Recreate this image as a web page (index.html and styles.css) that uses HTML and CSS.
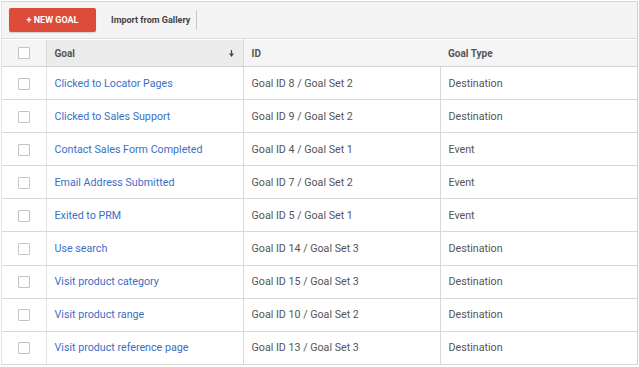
FILE: index.html
```html
<!DOCTYPE html>
<html lang="en">
<head>
    <meta charset="UTF-8">
    <title>Goals</title>
    <link rel="stylesheet" href="styles.css">
</head>
<body>
    <div class="panel">
        <div class="toolbar">
            <button class="new-goal">+ NEW GOAL</button>
            <span class="import">Import from Gallery</span>
        </div>

        <table class="goals">
            <thead>
                <tr>
                    <th class="check"><span class="box"></span></th>
                    <th class="sorted">
                        <div class="th-inner">
                            <span>Goal</span>
                            <svg class="sort" width="5" height="7" viewBox="0 0 5 7">
                                <path d="M2.5 0v4.5" stroke="#444" stroke-width="1.2"/>
                                <path d="M0 3.5h5L2.5 7z" fill="#444"/>
                            </svg>
                        </div>
                    </th>
                    <th>ID</th>
                    <th class="type">Goal Type</th>
                </tr>
            </thead>
            <tbody>
                <tr><td class="check"><span class="box"></span></td><td><a href="#">Clicked to Locator Pages</a></td><td>Goal ID 8 / Goal Set 2</td><td>Destination</td></tr>
                <tr><td class="check"><span class="box"></span></td><td><a href="#">Clicked to Sales Support</a></td><td>Goal ID 9 / Goal Set 2</td><td>Destination</td></tr>
                <tr><td class="check"><span class="box"></span></td><td><a href="#">Contact Sales Form Completed</a></td><td>Goal ID 4 / Goal Set 1</td><td>Event</td></tr>
                <tr><td class="check"><span class="box"></span></td><td><a href="#">Email Address Submitted</a></td><td>Goal ID 7 / Goal Set 2</td><td>Event</td></tr>
                <tr><td class="check"><span class="box"></span></td><td><a href="#">Exited to PRM</a></td><td>Goal ID 5 / Goal Set 1</td><td>Event</td></tr>
                <tr><td class="check"><span class="box"></span></td><td><a href="#">Use search</a></td><td>Goal ID 14 / Goal Set 3</td><td>Destination</td></tr>
                <tr><td class="check"><span class="box"></span></td><td><a href="#">Visit product category</a></td><td>Goal ID 15 / Goal Set 3</td><td>Destination</td></tr>
                <tr><td class="check"><span class="box"></span></td><td><a href="#">Visit product range</a></td><td>Goal ID 10 / Goal Set 2</td><td>Destination</td></tr>
                <tr><td class="check"><span class="box"></span></td><td><a href="#">Visit product reference page</a></td><td>Goal ID 13 / Goal Set 3</td><td>Destination</td></tr>
            </tbody>
        </table>
    </div>
</body>
</html>
```

FILE: styles.css
```css
* {
    margin: 0;
    padding: 0;
    box-sizing: border-box;
}

body {
    font-family: Roboto, "Liberation Sans", Arial, sans-serif;
    background-color: #ffffff;
    color: #444;
}

.panel {
    width: 637px;
    margin: 1px 0 0 1px;
    border-left: 1px solid #e2e2e2;
    border-right: 1px solid #d0d0d0;
}

/* toolbar */
.toolbar {
    height: 38px;
    display: flex;
    align-items: center;
    padding-left: 7px;
    padding-bottom: 1px;
    background-color: #f4f4f4;
    border-top: 1px solid #d6d6d6;
    border-bottom: 1px solid #dcdcdc;
}

.new-goal {
    width: 87px;
    height: 24px;
    background-color: #dd4b39;
    color: #fff;
    border: none;
    border-radius: 2px;
    font-family: inherit;
    font-size: 9px;
    font-weight: 700;
    box-shadow: 0 1px 1px rgba(0, 0, 0, 0.15);
}

.import {
    margin-left: 15px;
    padding-right: 6px;
    height: 20px;
    line-height: 20px;
    font-size: 9px;
    font-weight: 700;
    color: #444;
    border-right: 1px solid #c8c8c8;
}

/* table */
.goals {
    width: 100%;
    border-collapse: collapse;
    table-layout: fixed;
    font-size: 10.7px;
}

.goals th {
    height: 27px;
    padding: 0 8px;
    background-color: #f5f5f5;
    text-align: left;
    font-size: 10px;
    font-weight: 700;
    color: #555;
    border-top: 1px solid #fff;
    border-bottom: 1px solid #d4d4d4;
}

.goals th.check {
    width: 44px;
    text-align: center;
}

.goals th.sorted {
    width: 197px;
    background-color: #ececec;
    border-left: 1px solid #dcdcdc;
    border-right: 1px solid #dcdcdc;
}

.goals th:nth-child(3) {
    width: 197px;
}

.th-inner {
    display: flex;
    justify-content: space-between;
    align-items: center;
    padding-right: 1px;
}

.goals td {
    height: 33.1px;
    padding: 0 8px;
    color: #555;
    border-bottom: 1px solid #d8d8d8;
    border-right: 1px solid #d8d8d8;
    white-space: nowrap;
}

.goals td:last-child {
    border-right: none;
}

.goals td.check {
    text-align: center;
    border-right: 1px solid #e4e4e4;
}

.box {
    display: inline-block;
    width: 12px;
    height: 12px;
    border: 1px solid #c4c4c4;
    border-radius: 1px;
    background-color: #fff;
    vertical-align: middle;
}

.goals a {
    color: #3b6fc6;
    text-decoration: none;
}
```
